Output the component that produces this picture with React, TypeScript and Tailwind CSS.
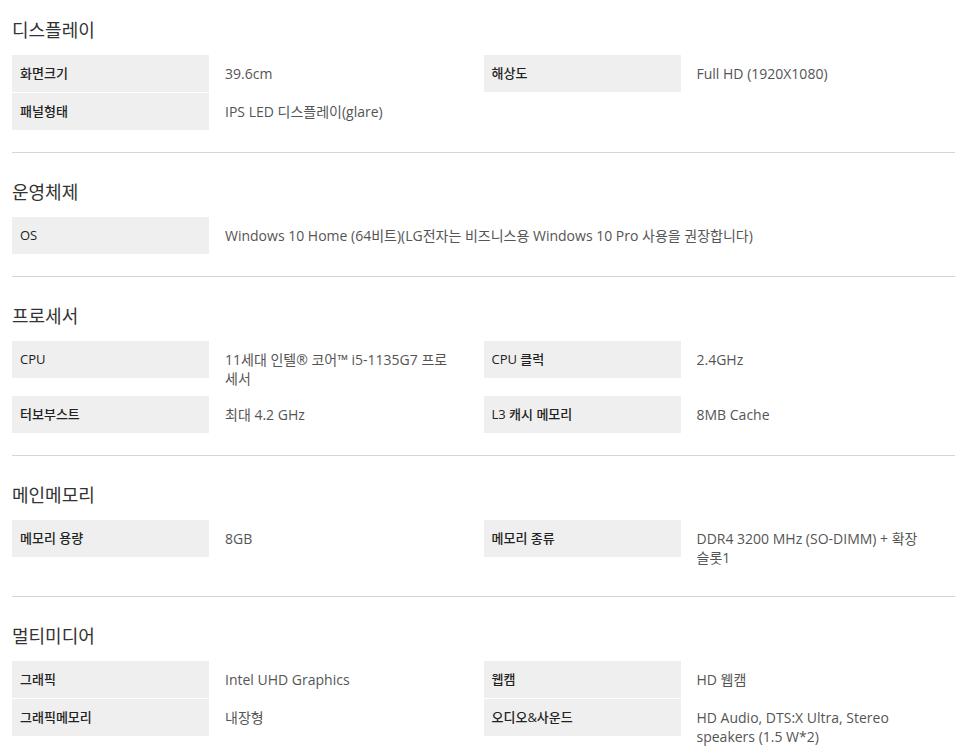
const font = { fontFamily: '"Open Sans", "Noto Sans CJK KR", sans-serif' }

interface Spec {
  label: string
  value: string
}

interface Section {
  title: string
  items: Spec[]
}

const sections: Section[] = [
  {
    title: "디스플레이",
    items: [
      { label: "화면크기", value: "39.6cm" },
      { label: "해상도", value: "Full HD (1920X1080)" },
      { label: "패널형태", value: "IPS LED 디스플레이(glare)" },
    ],
  },
  {
    title: "운영체제",
    items: [
      {
        label: "OS",
        value: "Windows 10 Home (64비트)(LG전자는 비즈니스용 Windows 10 Pro 사용을 권장합니다)",
      },
    ],
  },
  {
    title: "프로세서",
    items: [
      { label: "CPU", value: "11세대 인텔® 코어™ i5-1135G7 프로세서" },
      { label: "CPU 클럭", value: "2.4GHz" },
      { label: "터보부스트", value: "최대 4.2 GHz" },
      { label: "L3 캐시 메모리", value: "8MB Cache" },
    ],
  },
  {
    title: "메인메모리",
    items: [
      { label: "메모리 용량", value: "8GB" },
      { label: "메모리 종류", value: "DDR4 3200 MHz (SO-DIMM) + 확장 슬롯1" },
    ],
  },
  {
    title: "멀티미디어",
    items: [
      { label: "그래픽", value: "Intel UHD Graphics" },
      { label: "웹캠", value: "HD 웹캠" },
      { label: "그래픽메모리", value: "내장형" },
      { label: "오디오&사운드", value: "HD Audio, DTS:X Ultra, Stereo speakers (1.5 W*2)" },
    ],
  },
]

function SpecRow({ spec, wide }: { spec: Spec; wide?: boolean }) {
  return (
    <div className={`flex items-start mb-px ${wide ? "col-span-2" : ""}`}>
      <div className="w-[197px] h-[37px] shrink-0 bg-[#efefef] px-2 flex items-center text-[13px] font-medium text-[#222]">
        {spec.label}
      </div>
      <div
        className={`pl-4 pt-[9px] pb-[7px] leading-[19px] text-[14px] text-[#555] ${wide ? "flex-1" : "w-[250px]"}`}
      >
        {spec.value}
      </div>
    </div>
  )
}

export default function App() {
  return (
    <div className="bg-white min-h-[755px] px-3" style={font}>
      <div className="w-[943px]">
        {sections.map((section, i) => (
          <section
            key={section.title}
            className={`pb-[21px] ${i === 0 ? "pt-[19px]" : "pt-[28px] border-t border-[#d6d6d6]"}`}
          >
            <h2 className="text-[18px] leading-[22px] text-[#333] mb-[14px]">{section.title}</h2>
            <div className="grid grid-cols-2">
              {section.items.map((spec) => (
                <SpecRow key={spec.label} spec={spec} wide={section.items.length === 1} />
              ))}
            </div>
          </section>
        ))}
      </div>
    </div>
  )
}
